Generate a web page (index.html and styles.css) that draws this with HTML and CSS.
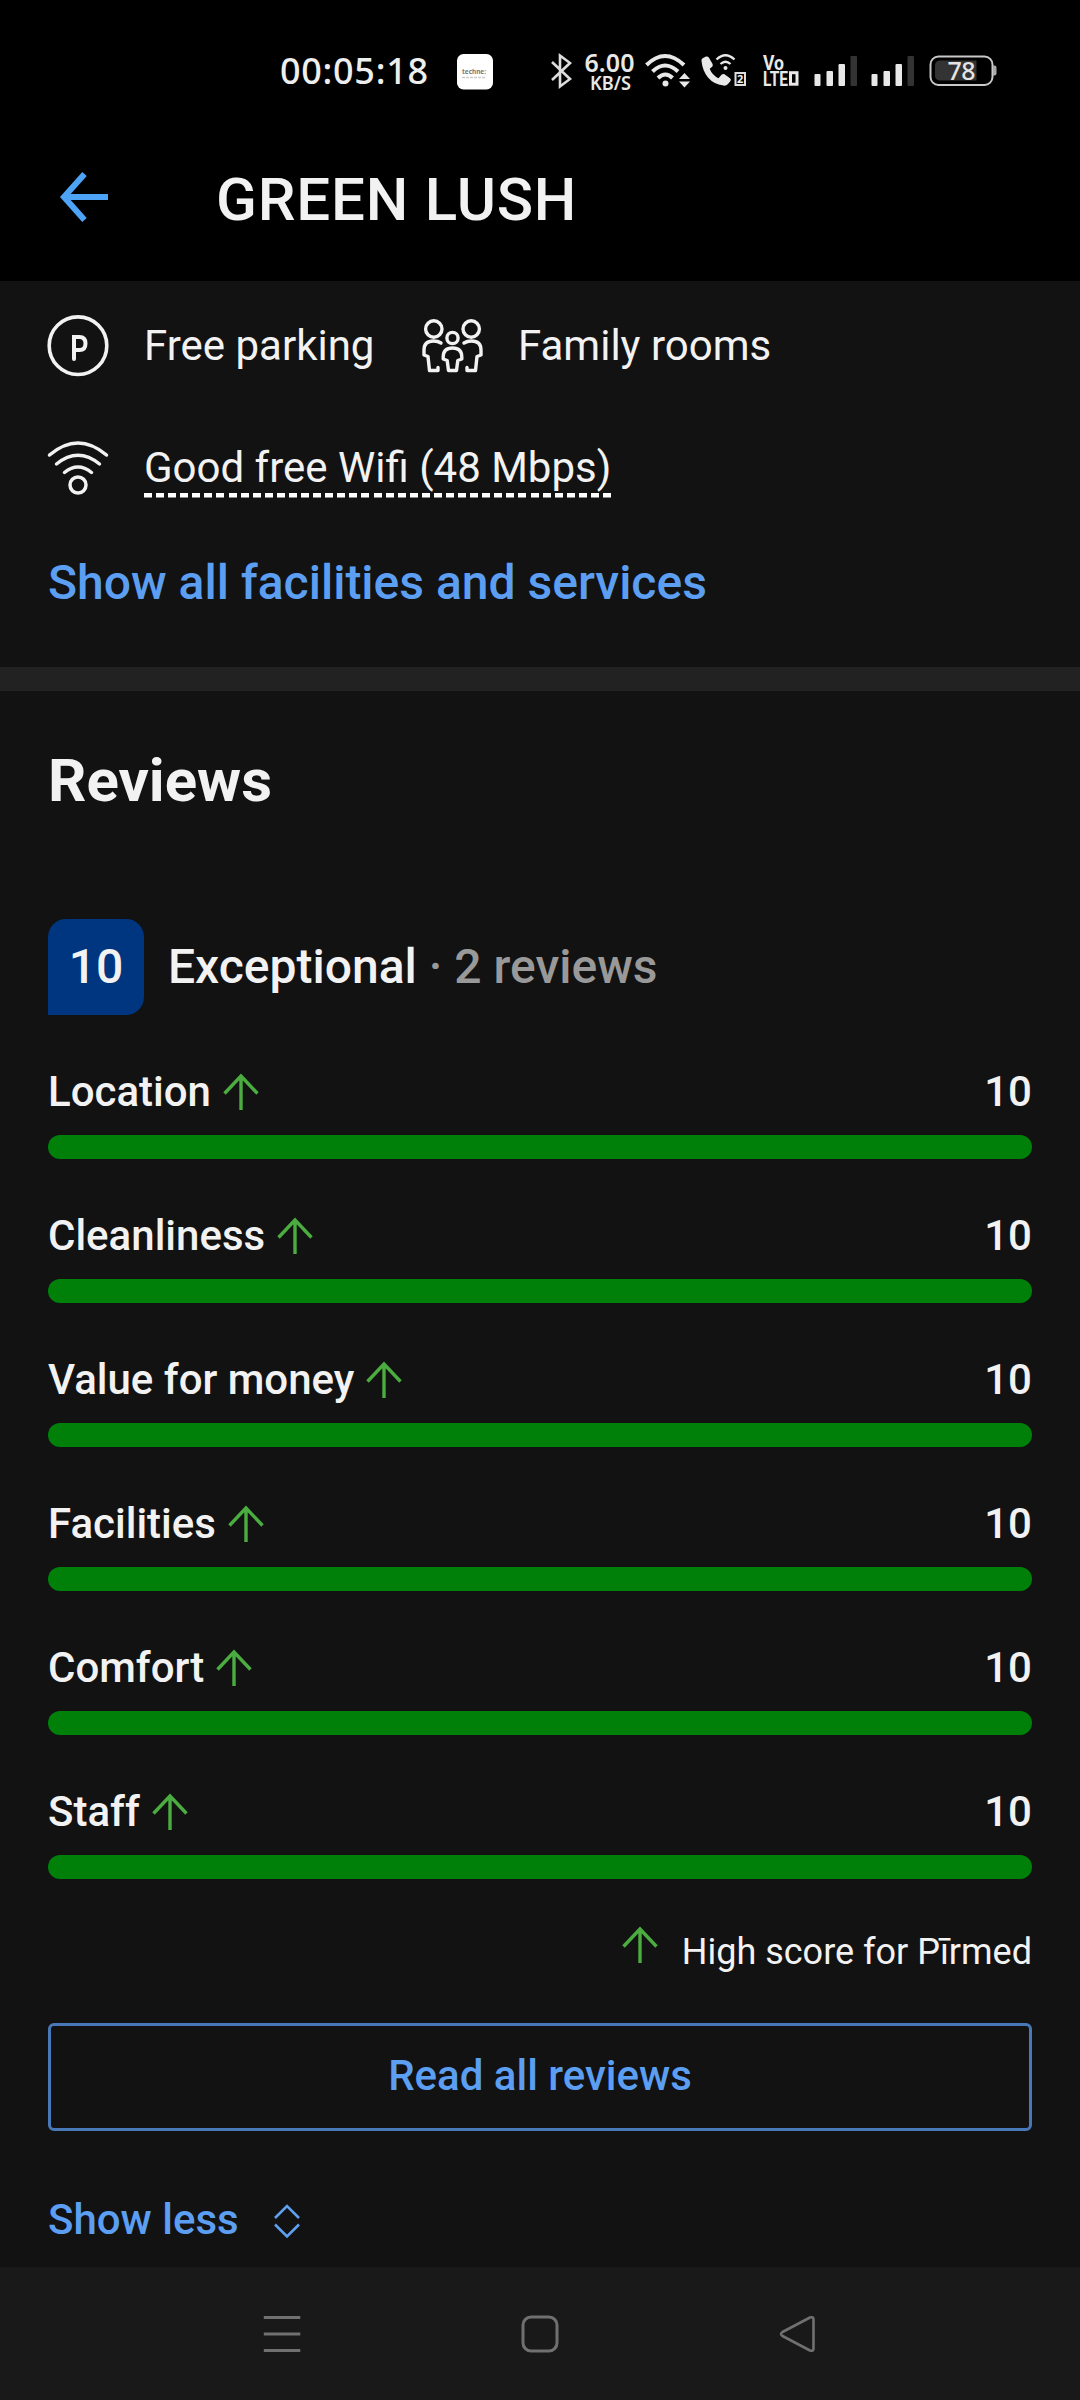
FILE: index.html
```html
<!DOCTYPE html>
<html lang="en">
<head>
<meta charset="utf-8">
<title>GREEN LUSH</title>
<link rel="stylesheet" href="styles.css">
</head>
<body>
<svg class="defs" aria-hidden="true">
  <symbol id="up" viewBox="0 0 36 38"><path d="M18 37V3M1.500 20.500 18 3l16.500 17.500" fill="none" stroke="#4bac3f" stroke-width="3.400"/></symbol>
</svg>
<div class="screen">
  <div class="status">
    <span class="time">00:05:18</span>
    <svg class="app" width="36" height="44" viewBox="457 49 36 44"><rect x="457" y="54" width="36" height="35.500" rx="6.500" fill="#fff"/><text x="462" y="73.500" textLength="24" lengthAdjust="spacingAndGlyphs" font-size="7" font-weight="700" fill="#777">techne:</text><path d="M462 77.500h24" stroke="#ccc" stroke-width="1.500" stroke-dasharray="3 1"/></svg>
    <svg class="bt" width="22" height="44" viewBox="551 49 22 44" fill="none" stroke="#ddd" stroke-width="2.600"><path d="m552 62 18 17-10 7.500V55.500L570 63l-18 17"/></svg>
    <svg class="speed" width="52" height="44" viewBox="584 49 52 44" fill="#e8e8e8"><text x="584.500" y="71.500" textLength="50" font-size="25" font-weight="600">6.00</text><text x="590" y="90" textLength="41" lengthAdjust="spacingAndGlyphs" font-size="19" font-weight="600">KB/S</text></svg>
    <svg class="wifi" width="46" height="44" viewBox="645 49 46 44" fill="none" stroke="#e8e8e8" stroke-width="4"><path d="M646.500 65q18.500-18 37.500 0M652.500 71.500q12.500-12 25.500 0M658 78q7.500-7 14.500 0"/><circle cx="665.500" cy="83.500" r="3" fill="#e8e8e8" stroke="none"/><path d="m679 79 5.500-6 5.500 6zM679 81.500l5.500 6 5.500-6z" fill="#e8e8e8" stroke="none"/></svg>
    <svg class="call" width="46" height="44" viewBox="701 49 46 44"><path d="M701.500 61q-.5-2 1.500-3l3-1.500q1.800-.5 2.800 1l3.800 6.500q.7 1.800-.7 3l-2.200 1.800q2.500 6.500 8.800 9.500l3-3.500q1.500-1.300 3-.5l5.500 4q1.500 1.200.5 2.800l-2.500 3q-1.800 1.800-4.500 1.500-10-1.300-15.500-8-5.500-7-6.500-16.600z" fill="#e8e8e8"/><path d="M716.500 59.500q9-8.500 18 0M720.500 64q5-4.500 10 0" fill="none" stroke="#e8e8e8" stroke-width="2.300"/><circle cx="725.500" cy="68" r="2" fill="#e8e8e8"/><rect x="735.500" y="73" width="9.500" height="12" fill="none" stroke="#ddd" stroke-width="2"/><text x="737" y="83" font-size="11" font-weight="700" fill="#eee">2</text></svg>
    <svg class="volte" width="37" height="44" viewBox="763 49 37 44" fill="#e8e8e8" font-size="20" font-weight="700"><text x="763" y="70" textLength="21" lengthAdjust="spacingAndGlyphs">Vo</text><text x="763" y="85.500" textLength="25" lengthAdjust="spacingAndGlyphs">LTE</text><rect x="790.500" y="72.700" width="6.500" height="11.500" fill="none" stroke="#e8e8e8" stroke-width="3"/></svg>
    <svg class="sig1" width="44" height="44" viewBox="814 49 44 44" fill="#e8e8e8"><rect x="814.500" y="74" width="6" height="12" rx="1"/><rect x="826.500" y="71" width="6.500" height="15" rx="1"/><rect x="838.500" y="64" width="6.500" height="22" rx="1"/><rect x="850.500" y="56" width="6.500" height="30" rx="1" fill="#333"/></svg>
    <svg class="sig2" width="44" height="44" viewBox="814 49 44 44" fill="#e8e8e8"><rect x="814.500" y="74" width="6" height="12" rx="1"/><rect x="826.500" y="71" width="6.500" height="15" rx="1"/><rect x="838.500" y="64" width="6.500" height="22" rx="1"/><rect x="850.500" y="56" width="6.500" height="30" rx="1" fill="#333"/></svg>
    <svg class="batt" width="68" height="44" viewBox="929 49 68 44"><rect x="930.500" y="56.500" width="62" height="28.500" rx="8" fill="none" stroke="#c8c8c8" stroke-width="2"/><path d="M939 60.500h37.500v20H939q-4-1-4-5v-10q0-4 4-5z" fill="#333"/><path d="M993 65.500h1.500q2 0 2 2v6q0 2-2 2H993z" fill="#aaa"/><text x="947.500" y="80" textLength="28" font-size="25" font-weight="500" fill="#e4e4e4">78</text></svg>
  </div>

  <header class="appbar">
    <svg class="back" width="50" height="50" viewBox="0 0 50 50" fill="none" stroke="#4da3f5" stroke-width="6"><path d="M49 25H5M25.500 2 5 25l20.500 23"/></svg>
    <h1>GREEN LUSH</h1>
  </header>

  <section class="facilities">
    <div class="row">
      <svg width="62" height="62" viewBox="48.500 315 62 62" fill="none" stroke="#f2f2f2"><circle cx="78.500" cy="345.700" r="28.800" stroke-width="3.600"/><path d="M74.500 359V337h5.500q6 0 6 6.500t-6 6.500h-5.500" stroke-width="4" stroke-linecap="round"/></svg>
      <span class="parking">Free parking</span>
      <svg class="family-icon" width="62" height="62" viewBox="421.500 315 62 62" fill="none" stroke="#f2f2f2" stroke-width="3.400" stroke-linejoin="round" stroke-linecap="round"><circle cx="433.300" cy="329" r="8.200"/><circle cx="470.700" cy="329" r="8.200"/><circle cx="452" cy="338" r="5.600"/><path d="M440.500 343q-3-2-7.500-2-9.500 0-9.500 9v5l4 1.500 1.500 14h8.500v-3M463.500 343q3-2 7.500-2 9.500 0 9.500 9v5l-4 1.500-1.500 14h-8.500v-3M452 348q-9.300 0-9.300 9v2l4 1.500 1.300 10h8l1.300-10 4-1.500v-2q0-9-9.300-9z"/></svg>
      <span class="family">Family rooms</span>
    </div>
    <div class="row wifi-row">
      <svg width="62" height="62" viewBox="48.500 436 62 62" fill="none" stroke="#f2f2f2" stroke-width="3.500" stroke-linecap="round"><path d="M50 455q28.500-24 57 0M57 464q21.500-17.500 43 0M65 472.500q13.500-11 27 0"/><circle cx="78.500" cy="485" r="8"/></svg>
      <span class="good">Good free Wifi (48 Mbps)</span>
    </div>
    <a class="all">Show all facilities and services</a>
  </section>

  <section class="reviews">
    <h2>Reviews</h2>
    <div class="summary">
      <div class="badge">10</div>
      <div class="verdict">Exceptional <span>· 2 reviews</span></div>
    </div>
    <div class="scores">
      <div class="score"><div class="label"><span>Location</span><svg><use href="#up"/></svg><b>10</b></div><div class="bar"></div></div>
      <div class="score"><div class="label"><span>Cleanliness</span><svg><use href="#up"/></svg><b>10</b></div><div class="bar"></div></div>
      <div class="score"><div class="label"><span>Value for money</span><svg><use href="#up"/></svg><b>10</b></div><div class="bar"></div></div>
      <div class="score"><div class="label"><span>Facilities</span><svg><use href="#up"/></svg><b>10</b></div><div class="bar"></div></div>
      <div class="score"><div class="label"><span>Comfort</span><svg><use href="#up"/></svg><b>10</b></div><div class="bar"></div></div>
      <div class="score"><div class="label"><span>Staff</span><svg><use href="#up"/></svg><b>10</b></div><div class="bar"></div></div>
    </div>
    <div class="legend"><svg><use href="#up"/></svg><span>High score for Pīrmed</span></div>
    <button class="read">Read all reviews</button>
    <div class="less"><span>Show less</span><svg width="28" height="36" viewBox="0 0 28 36" fill="none" stroke="#5fa0f0" stroke-width="2.600"><path d="M2 15 14 3l12 12M2 21.500l12 12 12-12"/></svg></div>
  </section>

  <nav class="nav">
    <svg width="40" height="40" viewBox="0 0 40 40" stroke="#707070" stroke-width="3.200"><path d="M1.800 3.500h36.500M1.800 20h36.500M1.800 36.500h36.500"/></svg>
    <svg width="40" height="40" viewBox="0 0 40 40" fill="none" stroke="#707070" stroke-width="3"><rect x="3" y="3" width="34" height="34" rx="8"/></svg>
    <svg width="40" height="40" viewBox="0 0 40 40" fill="none" stroke="#707070" stroke-width="2.600" stroke-linejoin="round"><path d="M4.500 18 32 3.500q3.500-1 3.500 2v29q0 3-3.500 2L4.500 22q-3-2 0-4z"/></svg>
  </nav>
</div>
</body>
</html>
```
FILE: styles.css
```css
* { box-sizing: border-box; }
body { margin: 0; background: #121212; color: #f2f2f2; font-family: Roboto, sans-serif; }
h1, h2 { margin: 0; }
svg { display: block; flex: none; overflow: visible; }
.defs { width: 0; height: 0; position: absolute; }
.screen { width: 1080px; height: 2400px; display: flex; flex-direction: column; overflow: hidden; }

.status { height: 118px; padding: 24px 0 0 280px; background: #000; display: flex; align-items: center; font-family: "Noto Sans", sans-serif; flex: none; }
.time { width: 177px; font-size: 36px; font-weight: 500; line-height: 44px; color: #eee; letter-spacing: .7px; white-space: nowrap; }
.bt { margin-left: 58px; }
.speed { margin-left: 11px; }
.wifi { margin-left: 9px; }
.call { margin-left: 10px; }
.volte { margin-left: 16px; font-family: Roboto, sans-serif; }
.sig1 { margin-left: 14px; }
.sig2 { margin-left: 13px; }
.batt { margin-left: 14px; }

.appbar { height: 163px; flex: none; background: #000; display: flex; align-items: center; padding-left: 59px; }
.back { margin-bottom: 5px; }
.appbar h1 { margin-left: 107px; font-size: 60px; font-weight: 500; line-height: 70px; letter-spacing: .8px; }

.facilities { height: 386px; flex: none; padding: 34px 48px 0; font-size: 42px; }
.row { display: flex; align-items: center; height: 62px; line-height: 50px; white-space: nowrap; }
.parking { margin-left: 34px; width: 277.500px; }
.family { margin-left: 34.500px; }
.wifi-row { margin-top: 59px; }
.good { margin-left: 34px; height: 62px; line-height: 63px; width: 467px; background: repeating-linear-gradient(90deg, #fff 0 8px, transparent 8px 12.080px) 0 57px / 100% 4.500px no-repeat; }
.all { display: block; margin-top: 57px; font-size: 48px; line-height: 56px; font-weight: 500; color: #5c9ff2; white-space: nowrap; }

.reviews { flex: none; height: 1600px; padding: 55px 48px 0; border-top: 24px solid #222; }
.reviews h2 { font-size: 60px; line-height: 70px; font-weight: 700; }
.summary { display: flex; align-items: center; margin-top: 103px; height: 96px; }
.badge { width: 96px; height: 96px; border-radius: 18px 18px 18px 0; background: #003580; text-align: center; font-size: 48px; font-weight: 500; line-height: 96px; }
.verdict { margin-left: 24px; font-size: 48px; line-height: 94px; font-weight: 500; white-space: nowrap; }
.verdict span { color: #999; }
.scores { padding-top: 51px; }
.score { height: 144px; }
.label { display: flex; height: 50px; line-height: 52px; font-size: 42px; font-weight: 500; }
.label svg, .legend svg { width: 36px; height: 38px; }
.label svg { margin: 7px 0 0 12px; }
.label b { margin-left: auto; font-weight: 500; }
.bar { height: 24px; margin-top: 19px; border-radius: 12px; background: #008009; }
.legend { display: flex; justify-content: flex-end; height: 46px; margin-top: -2px; font-size: 36px; line-height: 48px; }
.legend span { margin-left: 24px; }
.legend svg { margin-top: -2px; }
.read { display: block; width: 984px; height: 108px; margin-top: 49px; padding: 0 0 4px; border: 3px solid #4878b8; border-radius: 6px; background: none; color: #5c9ff2; font: 500 42px Roboto, sans-serif; }
.less { display: flex; align-items: center; margin-top: 64px; height: 50px; font-size: 42px; font-weight: 500; line-height: 50px; color: #5c9ff2; }
.less svg { margin: 1px 0 0 34px; }

.nav { flex: none; height: 133px; background: #191919; display: flex; padding: 47px 262px 0; justify-content: space-between; }
.nav svg:nth-child(2) { margin-right: 1px; }
```
